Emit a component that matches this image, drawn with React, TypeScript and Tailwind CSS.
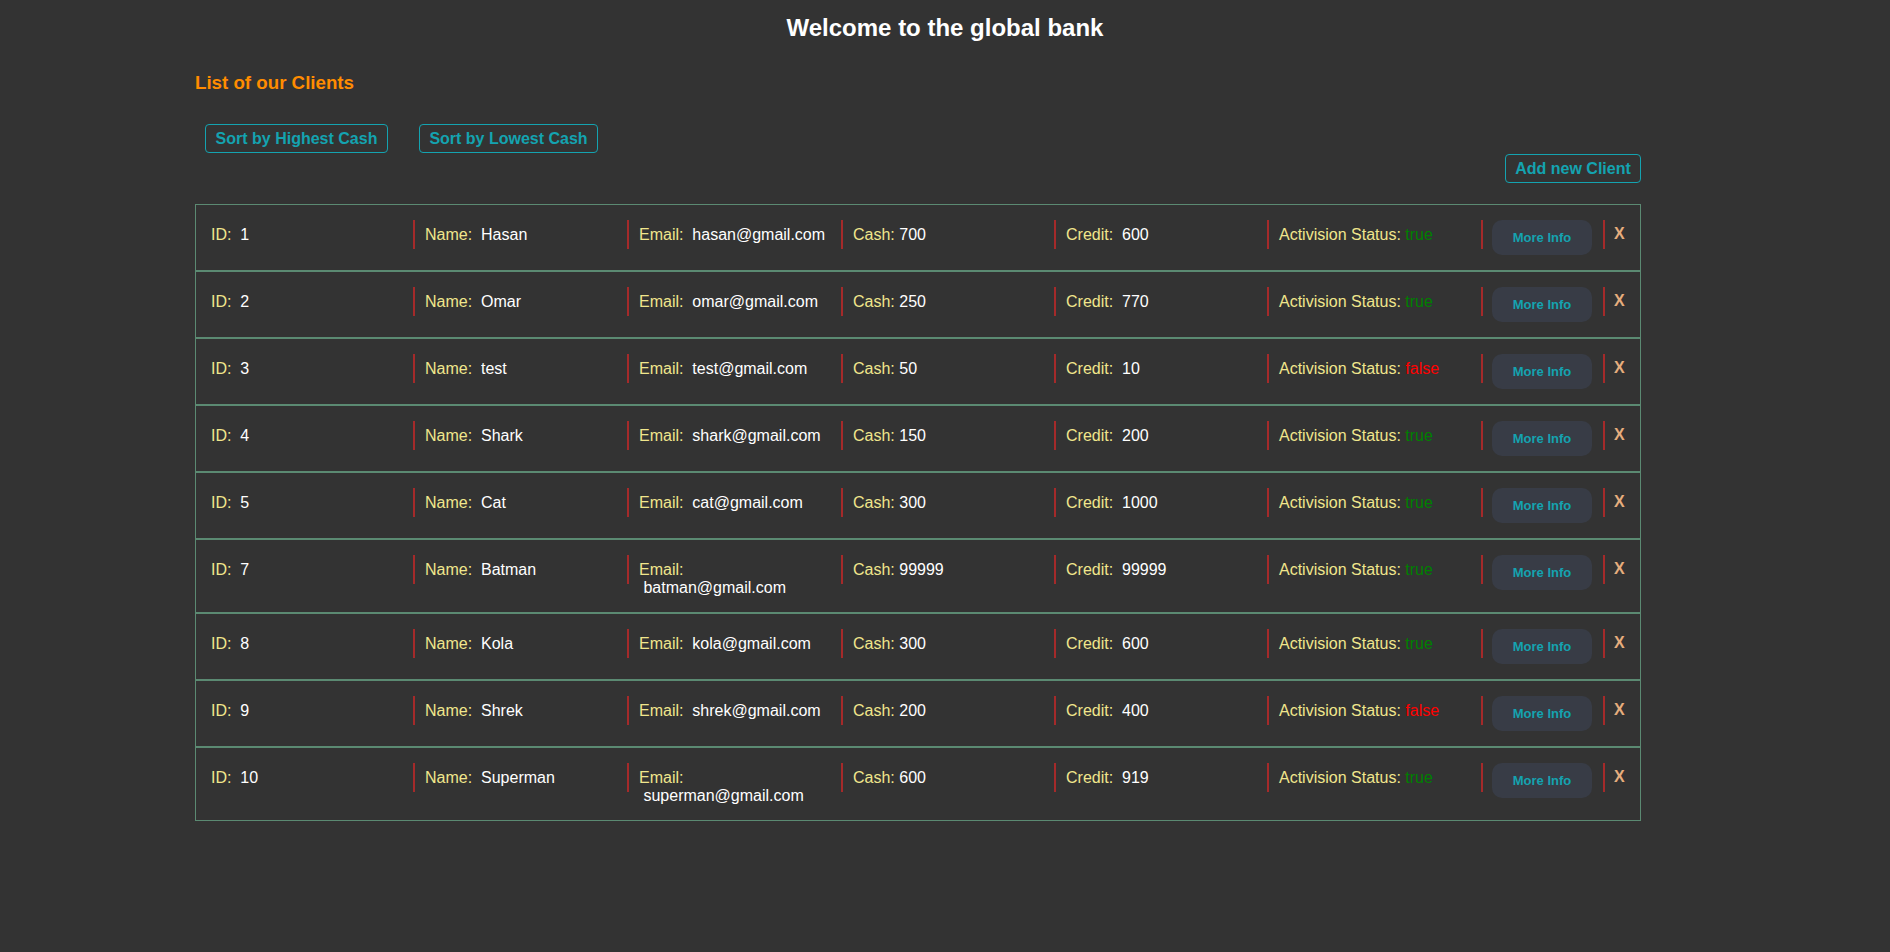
import React from "react";

type Client = {
  id: number;
  name: string;
  email: string;
  cash: number;
  credit: number;
  active: boolean;
};

const clients: Client[] = [
  { id: 1, name: "Hasan", email: "hasan@gmail.com", cash: 700, credit: 600, active: true },
  { id: 2, name: "Omar", email: "omar@gmail.com", cash: 250, credit: 770, active: true },
  { id: 3, name: "test", email: "test@gmail.com", cash: 50, credit: 10, active: false },
  { id: 4, name: "Shark", email: "shark@gmail.com", cash: 150, credit: 200, active: true },
  { id: 5, name: "Cat", email: "cat@gmail.com", cash: 300, credit: 1000, active: true },
  { id: 7, name: "Batman", email: "batman@gmail.com", cash: 99999, credit: 99999, active: true },
  { id: 8, name: "Kola", email: "kola@gmail.com", cash: 300, credit: 600, active: true },
  { id: 9, name: "Shrek", email: "shrek@gmail.com", cash: 200, credit: 400, active: false },
  { id: 10, name: "Superman", email: "superman@gmail.com", cash: 600, credit: 919, active: true },
];

const Sep = () => <div className="w-[2px] h-[29px] bg-[#a52a2a] shrink-0" />;

function Cell({ width, children }: { width: string; children: React.ReactNode }) {
  return (
    <div className={`flex items-start shrink-0 ${width}`}>
      <Sep />
      <div className="pl-[10px] pr-[12px] pt-[6px] leading-[18px] min-w-0">{children}</div>
    </div>
  );
}

function Row({ c }: { c: Client }) {
  return (
    <div className="flex items-start border border-[#5b8a72] pl-[15px] py-[15px] text-[16px]">
      <div className="w-[202px] shrink-0 pt-[6px] leading-[18px]">
        <span className="text-[#f0e68c]">ID: </span>
        <span className="text-white">{"\u00a0" + c.id}</span>
      </div>
      <Cell width="w-[214px]">
        <span className="text-[#f0e68c]">Name: </span>
        <span className="text-white">{"\u00a0" + c.name}</span>
      </Cell>
      <Cell width="w-[214px]">
        <span className="text-[#f0e68c]">Email: </span>
        <span className="text-white">{"\u00a0" + c.email}</span>
      </Cell>
      <Cell width="w-[213px]">
        <span className="text-[#f0e68c]">Cash: </span>
        <span className="text-white">{c.cash}</span>
      </Cell>
      <Cell width="w-[213px]">
        <span className="text-[#f0e68c]">Credit: </span>
        <span className="text-white">{"\u00a0" + c.credit}</span>
      </Cell>
      <Cell width="w-[214px]">
        <span className="text-[#f0e68c]">Activision Status: </span>
        {c.active ? (
          <span className="text-[#008000]">true</span>
        ) : (
          <span className="text-[#ff0000]">false</span>
        )}
      </Cell>
      <div className="flex items-start w-[122px] shrink-0">
        <Sep />
        <div className="pl-[9px]">
          <button className="w-[100px] h-[35px] rounded-[10px] bg-[#383c46] text-[#14a3b0] text-[13px] font-bold flex items-center justify-center">
            More Info
          </button>
        </div>
      </div>
      <div className="flex items-start shrink-0">
        <Sep />
        <div className="pl-[9px] pt-[5px] leading-[18px] font-bold text-[#e6ad7d]">X</div>
      </div>
    </div>
  );
}

export default function App() {
  return (
    <div
      className="min-h-screen w-full bg-[#333333] pt-[14px]"
      style={{ fontFamily: '"Liberation Sans", Arial, sans-serif' }}
    >
      <h2 className="text-center text-white font-bold text-[24px] leading-[28px]">
        Welcome to the global bank
      </h2>
      <div className="ml-[195px] w-[1446px]">
        <h3 className="mt-[30px] text-[#ff8c00] font-bold text-[18.72px] leading-[22px]">
          List of our Clients
        </h3>
        <div className="mt-[30px] flex pl-[10px] gap-[31px]">
          <button className="w-[183px] h-[29px] border border-[#14a3b0] rounded-[4px] text-[#14a3b0] font-bold text-[16px] leading-[18px] flex items-center justify-center">
            Sort by Highest Cash
          </button>
          <button className="w-[179px] h-[29px] border border-[#14a3b0] rounded-[4px] text-[#14a3b0] font-bold text-[16px] leading-[18px] flex items-center justify-center">
            Sort by Lowest Cash
          </button>
        </div>
        <div className="mt-[1px] flex justify-end">
          <button className="w-[136px] h-[29px] border border-[#14a3b0] rounded-[4px] text-[#14a3b0] font-bold text-[16px] leading-[18px] flex items-center justify-center">
            Add new Client
          </button>
        </div>
        <div className="mt-[21px] flex flex-col">
          {clients.map((c) => (
            <Row key={c.id} c={c} />
          ))}
        </div>
      </div>
    </div>
  );
}
